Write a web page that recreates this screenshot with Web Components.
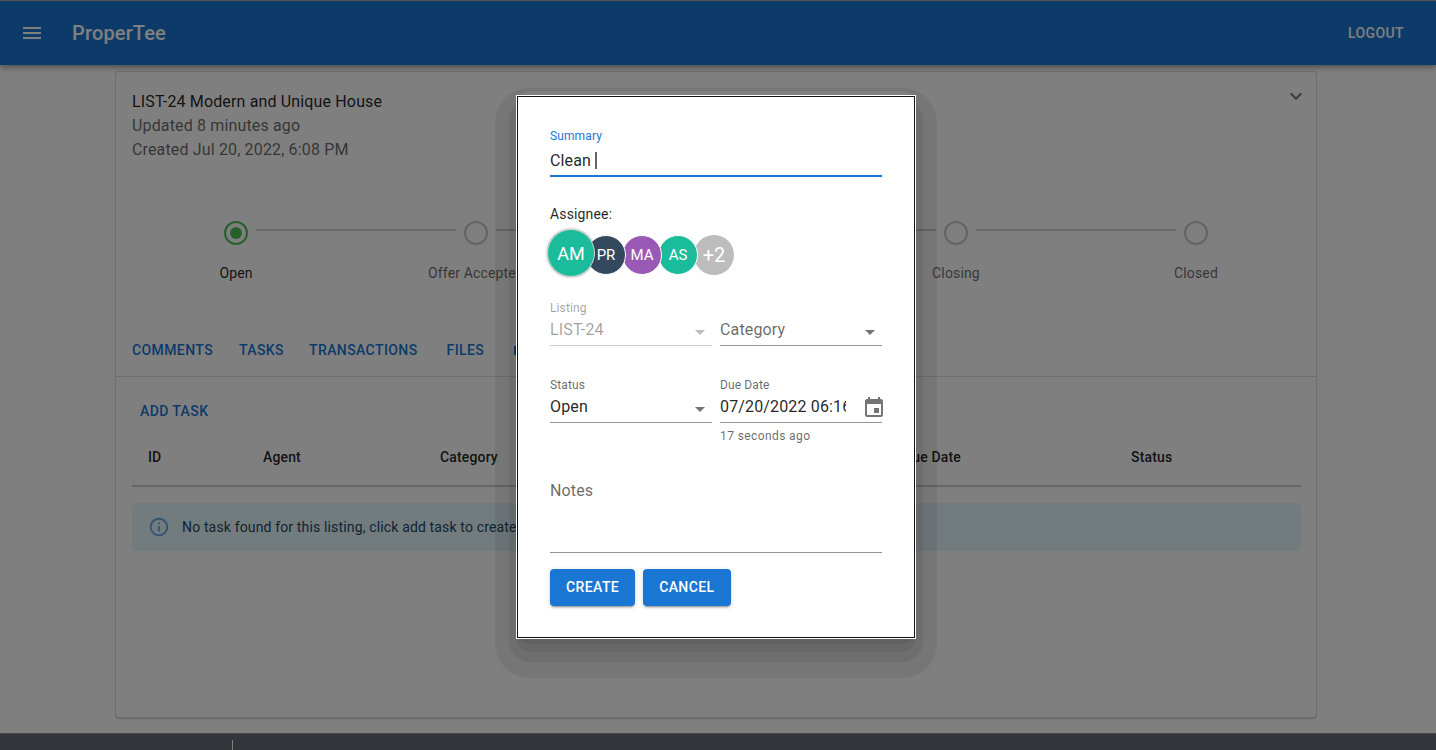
<!DOCTYPE html>
<html>
<head>
<meta charset="utf-8">
<title>ProperTee</title>
<style>
  html, body { margin: 0; height: 100%; overflow: hidden; }
  body { font-family: Roboto, "Liberation Sans", sans-serif; background: #fff; }
  pt-shell { height: 100%; }
</style>
</head>
<body>
<pt-shell>
  <pt-app-bar slot="bar" title="ProperTee"></pt-app-bar>
  <pt-listing-card>
    <span slot="title">LIST-24 Modern and Unique House</span>
    <span slot="updated">Updated 8 minutes ago</span>
    <span slot="created">Created Jul 20, 2022, 6:08 PM</span>
  </pt-listing-card>
  <pt-footer slot="footer"></pt-footer>
</pt-shell>
<pt-task-dialog></pt-task-dialog>

<script>
const ARROW = `<svg class="arrow" width="24" height="24" viewBox="0 0 24 24" fill="currentColor"><path d="M7 10l5 5 5-5z"/></svg>`;

class PtShell extends HTMLElement {
  constructor() {
    super();
    this.attachShadow({ mode: "open" });
    this.shadowRoot.innerHTML = `
      <style>
        :host { display: flex; flex-direction: column; }
        main { flex: 1; min-height: 0; display: flex; justify-content: center; padding-right: 4px; }
      </style>
      <slot name="bar"></slot>
      <main><slot></slot></main>
      <slot name="footer"></slot>
    `;
  }
}

class PtAppBar extends HTMLElement {
  constructor() {
    super();
    this.attachShadow({ mode: "open" });
    this.shadowRoot.innerHTML = `
      <style>
        :host {
          display: flex; align-items: center; height: 64px; padding: 0 32px 0 20px;
          background: #1976d2; color: #fff; border-top: 1px solid #aaa;
          box-shadow: 0 2px 4px -1px rgba(0,0,0,.2), 0 4px 5px rgba(0,0,0,.14), 0 1px 10px rgba(0,0,0,.12);
          position: relative; z-index: 1;
        }
        svg { display: block; margin-right: 28px; }
        h1 { margin: 0; flex: 1; font-size: 20px; font-weight: 500; letter-spacing: .0075em; }
        span { font-size: 14px; font-weight: 500; letter-spacing: .02857em; }
      </style>
      <svg width="24" height="24" viewBox="0 0 24 24" fill="currentColor"><path d="M3 18h18v-2H3v2zm0-5h18v-2H3v2zm0-7v2h18V6H3z"/></svg>
      <h1></h1>
      <span>LOGOUT</span>
    `;
    this.shadowRoot.querySelector("h1").innerText = this.getAttribute("title");
  }
}

class PtStepper extends HTMLElement {
  constructor() {
    super();
    this.attachShadow({ mode: "open" });
    const steps = ["Open", "Offer Accepted", "", "Closing", "Closed"];
    this.shadowRoot.innerHTML = `
      <style>
        :host { display: grid; grid-template-columns: repeat(5, 240px); }
        .step { position: relative; display: flex; flex-direction: column; align-items: center; }
        svg { display: block; color: #c8c8c8; }
        .step.active svg { color: #50c058; }
        .line { position: absolute; top: 8px; left: -100px; width: 200px; height: 2px; background: #d0d0d0; }
        .label { margin-top: 18px; height: 20px; font-size: 14px; line-height: 20px; letter-spacing: .01071em; color: rgba(0,0,0,.6); }
        .step.active .label { color: rgba(0,0,0,.87); }
      </style>
      ${steps.map((s, i) => `
        <div class="step ${i === 0 ? "active" : ""}">
          ${i > 0 ? '<div class="line"></div>' : ""}
          <svg width="24" height="24" viewBox="0 0 24 24" fill="none">
            <circle cx="12" cy="12" r="11" stroke="currentColor" stroke-width="2"/>
            ${i === 0 ? '<circle cx="12" cy="12" r="6" fill="currentColor"/>' : ""}
          </svg>
          <div class="label">${s}</div>
        </div>`).join("")}
    `;
  }
}

class PtTabs extends HTMLElement {
  constructor() {
    super();
    this.attachShadow({ mode: "open" });
    this.shadowRoot.innerHTML = `
      <style>
        :host {
          display: flex; align-items: center; gap: 26px; box-sizing: border-box; height: 49px; padding: 0 16px 4px;
          border-bottom: 1px solid rgba(0,0,0,.12);
          font-size: 14px; font-weight: 500; letter-spacing: .02857em; color: #1976d2;
        }
        .trans { margin-left: -1px; }
        .files { margin-left: 3px; }
        .stem { width: 2px; height: 9px; margin-left: 4px; background: #1976d2; }
      </style>
      <span>COMMENTS</span><span>TASKS</span><span class="trans">TRANSACTIONS</span><span class="files">FILES</span>
      <div class="stem"></div>
    `;
  }
}

class PtAlert extends HTMLElement {
  constructor() {
    super();
    this.attachShadow({ mode: "open" });
    this.shadowRoot.innerHTML = `
      <style>
        :host {
          display: flex; align-items: center; gap: 12px; box-sizing: border-box; height: 48px; padding: 0 16px 1px;
          border-radius: 4px; background: #e5f6fd; color: #1b4a6b;
          font-size: 14px; letter-spacing: .01071em;
        }
        svg { display: block; color: #6aa8e8; }
      </style>
      <svg width="22" height="22" viewBox="0 0 24 24" fill="currentColor"><path d="M11 7h2v2h-2zm0 4h2v6h-2zm1-9C6.48 2 2 6.48 2 12s4.48 10 10 10 10-4.48 10-10S17.52 2 12 2zm0 18c-4.41 0-8-3.59-8-8s3.59-8 8-8 8 3.59 8 8-3.59 8-8 8z"/></svg>
      <span><slot></slot></span>
    `;
  }
}

class PtTaskTable extends HTMLElement {
  constructor() {
    super();
    this.attachShadow({ mode: "open" });
    this.shadowRoot.innerHTML = `
      <style>
        :host { display: block; margin: 0 15px 0 16px; font-size: 14px; letter-spacing: .01071em; color: rgba(0,0,0,.87); }
        .add {
          display: block; padding: 23px 8px 0; line-height: 22px; height: 28px;
          font-weight: 500; letter-spacing: .02857em; color: #1976d2;
        }
        .head {
          display: grid; grid-template-columns: 115px 177px 463px 228px 1fr;
          height: 57px; align-items: center; border-bottom: 2px solid rgba(0,0,0,.2);
          margin-bottom: 16px; font-weight: 500;
        }
        .head span { padding-left: 16px; }
      </style>
      <span class="add">ADD TASK</span>
      <div class="head">
        <span>ID</span><span>Agent</span><span>Category</span><span>Due Date</span><span>Status</span>
      </div>
      <pt-alert>No task found for this listing, click add task to create</pt-alert>
    `;
  }
}

class PtListingCard extends HTMLElement {
  constructor() {
    super();
    this.attachShadow({ mode: "open" });
    this.shadowRoot.innerHTML = `
      <style>
        :host {
          display: block; box-sizing: border-box; width: 1202px; height: 647px; margin-top: 6px;
          border: 1px solid rgba(0,0,0,.12); border-radius: 4px; background: #fff;
          box-shadow: 0 1px 1px rgba(0,0,0,.2);
        }
        header { display: flex; justify-content: space-between; padding: 18px 8px 0 16px; height: 88px; box-sizing: border-box; }
        .lines { font-size: 16px; line-height: 24px; letter-spacing: .00938em; color: rgba(0,0,0,.6); }
        .lines div:first-child { color: rgba(0,0,0,.87); }
        header svg { display: block; margin-top: -6px; color: rgba(0,0,0,.54); }
        pt-stepper { margin-top: 61px; }
        pt-tabs { margin-top: 45px; }
      </style>
      <header>
        <div class="lines">
          <div><slot name="title"></slot></div>
          <div><slot name="updated"></slot></div>
          <div><slot name="created"></slot></div>
        </div>
        <svg width="24" height="24" viewBox="0 0 24 24" fill="currentColor"><path d="M16.59 8.59 12 13.17 7.41 8.59 6 10l6 6 6-6z"/></svg>
      </header>
      <pt-stepper></pt-stepper>
      <pt-tabs></pt-tabs>
      <pt-task-table></pt-task-table>
    `;
  }
}

class PtFooter extends HTMLElement {
  constructor() {
    super();
    this.attachShadow({ mode: "open" });
    this.shadowRoot.innerHTML = `
      <style>
        :host { display: block; box-sizing: border-box; height: 17px; padding: 6px 0 0 232px; background: #646c76; border-top: 1px solid #8c8c8c; }
        div { width: 1px; height: 10px; background: #fff; }
      </style>
      <div></div>
    `;
  }
}

class PtAvatarGroup extends HTMLElement {
  constructor() {
    super();
    this.attachShadow({ mode: "open" });
    this.shadowRoot.innerHTML = `
      <style>
        :host { display: flex; align-items: flex-start; margin-left: -3px; height: 48px; }
        div {
          box-sizing: border-box; width: 40px; height: 40px; margin: 6px 0 0 -4px; border-radius: 50%;
          display: flex; align-items: center; justify-content: center;
          border: 1px solid #fff; color: #fff; font-size: 15px; position: relative;
        }
        .lead {
          width: 48px; height: 48px; margin: 0 -5px 0 0; font-size: 18px; z-index: 5;
          border: 1px solid #d8d8d8;
          box-shadow: 0 0 2px rgba(0,0,0,.5);
        }
        .more { border: 0; font-size: 20px; }
      </style>
      <div class="lead" style="background:#1abc9c">AM</div>
      <div style="background:#34495e;z-index:4">PR</div>
      <div style="background:#9b59b6;z-index:3">MA</div>
      <div style="background:#1abc9c;z-index:2">AS</div>
      <div class="more" style="background:#bdbdbd;z-index:1">+2</div>
    `;
  }
}

class PtField extends HTMLElement {
  constructor() {
    super();
    this.attachShadow({ mode: "open" });
    const label = this.getAttribute("label");
    const value = this.getAttribute("value");
    const helper = this.getAttribute("helper");
    const select = this.hasAttribute("select");
    this.shadowRoot.innerHTML = `
      <style>
        :host { display: block; font-size: 16px; letter-spacing: .00938em; color: rgba(0,0,0,.87); }
        :host([disabled]) { color: rgba(0,0,0,.38); }
        .label { height: 17px; font-size: 12px; line-height: 17px; color: rgba(0,0,0,.6); letter-spacing: .00938em; }
        :host([disabled]) .label { color: rgba(0,0,0,.38); }
        :host([focused]) .label { color: #1976d2; line-height: 15px; }
        .box {
          display: flex; align-items: center; height: 29px; padding-bottom: 4px; box-sizing: border-box;
          border-bottom: 1px solid rgba(0,0,0,.42);
        }
        :host([disabled]) .box { border-bottom-color: rgba(0,0,0,.2); }
        :host([focused]) .box { height: 31px; padding-bottom: 1px; border-bottom: 2px solid #1976d2; }
        .value { flex: 1; white-space: nowrap; overflow: hidden; min-width: 0; }
        :host([clip]) .value { flex: none; width: 126px; }
        .placeholder { color: rgba(0,0,0,.6); }
        .arrow { display: block; flex: none; margin-top: 5px; color: rgba(0,0,0,.54); }
        :host([disabled]) .arrow { color: rgba(0,0,0,.26); }
        .caret { display: inline-block; width: 2px; height: 17px; margin-left: 4px; background: #666; vertical-align: -3px; }
        .helper { margin-top: 5px; font-size: 12px; line-height: 16px; letter-spacing: .03333em; color: rgba(0,0,0,.6); }
      </style>
      ${label ? `<div class="label">${label}</div>` : ""}
      <div class="box">
        <div class="value ${value ? "" : "placeholder"}">${value || this.getAttribute("placeholder") || ""}${this.hasAttribute("focused") ? '<span class="caret"></span>' : ""}</div>
        ${select ? ARROW : ""}
        <slot></slot>
      </div>
      ${helper ? `<div class="helper">${helper}</div>` : ""}
    `;
  }
}

class PtButton extends HTMLElement {
  constructor() {
    super();
    this.attachShadow({ mode: "open" });
    this.shadowRoot.innerHTML = `
      <style>
        :host {
          display: inline-flex; align-items: center; box-sizing: border-box; height: 37px; padding: 0 16px 1px; border-radius: 4px;
          background: #1976d2; color: #fff; font-size: 14px; font-weight: 500; letter-spacing: .02857em;
          box-shadow: 0 3px 1px -2px rgba(0,0,0,.2), 0 2px 2px rgba(0,0,0,.14), 0 1px 5px rgba(0,0,0,.12);
        }
      </style>
      <slot></slot>
    `;
  }
}

class PtTaskDialog extends HTMLElement {
  constructor() {
    super();
    this.attachShadow({ mode: "open" });
    this.shadowRoot.innerHTML = `
      <style>
        :host {
          position: fixed; inset: 0; z-index: 10; display: block;
          background: rgba(0,0,0,.5); padding: 95px 0 0 516px;
        }
        /* the reference's shadow is banded, so stacked hard shadows instead of a blur */
        .glow {
          position: absolute; left: 516px; top: 91px; width: 400px; height: 548px; border-radius: 14px;
          box-shadow:
            0 5px 0 0 rgba(0,0,0,.07),
            0 13px 0 0 rgba(0,0,0,.07),
            0 15.5px 0 7.5px rgba(0,0,0,.07),
            0 18px 0 21px rgba(0,0,0,.07);
        }
        .paper {
          position: relative;
          box-sizing: border-box; width: 400px; height: 544px; padding: 33px 33px 0;
          background: #fff; border: 1px solid #fff; outline: 1px solid #111; outline-offset: -2px;
        }
        .assignee { margin-top: 27px; font-size: 14px; line-height: 20px; letter-spacing: .01071em; color: rgba(0,0,0,.87); }
        pt-avatar-group { margin-top: 5px; }
        .row { display: grid; grid-template-columns: 162px 162px; gap: 8px; }
        .listing { margin-top: 23px; }
        .status { margin-top: 31px; }
        .notes { margin-top: 26px; height: 83px; box-sizing: border-box; padding-top: 11px; font-size: 16px; letter-spacing: .00938em; color: rgba(0,0,0,.6); border-bottom: 1px solid rgba(0,0,0,.42); }
        .actions { display: flex; gap: 8px; margin-top: 16px; }
        .cal { display: block; margin: 4px -4px 0 auto; color: rgba(0,0,0,.54); }
      </style>
      <div class="glow"></div>
      <div class="paper">
        <pt-field label="Summary" value="Clean" focused></pt-field>
        <div class="assignee">Assignee:</div>
        <pt-avatar-group></pt-avatar-group>
        <div class="row listing">
          <pt-field label="Listing" value="LIST-24" select disabled></pt-field>
          <pt-field label="&nbsp;" placeholder="Category" select></pt-field>
        </div>
        <div class="row status">
          <pt-field label="Status" value="Open" select></pt-field>
          <pt-field label="Due Date" value="07/20/2022 06:16 PM" helper="17 seconds ago" clip>
            <svg class="cal" width="24" height="24" viewBox="0 0 24 24" fill="currentColor"><path d="M17 12h-5v5h5v-5zM16 1v2H8V1H6v2H5c-1.11 0-1.99.9-1.99 2L3 19c0 1.1.89 2 2 2h14c1.1 0 2-.9 2-2V5c0-1.1-.9-2-2-2h-1V1h-2zm3 18H5V8h14v11z"/></svg>
          </pt-field>
        </div>
        <div class="notes">Notes</div>
        <div class="actions">
          <pt-button>CREATE</pt-button>
          <pt-button>CANCEL</pt-button>
        </div>
      </div>
    `;
  }
}

customElements.define("pt-shell", PtShell);
customElements.define("pt-app-bar", PtAppBar);
customElements.define("pt-stepper", PtStepper);
customElements.define("pt-tabs", PtTabs);
customElements.define("pt-alert", PtAlert);
customElements.define("pt-task-table", PtTaskTable);
customElements.define("pt-listing-card", PtListingCard);
customElements.define("pt-footer", PtFooter);
customElements.define("pt-avatar-group", PtAvatarGroup);
customElements.define("pt-field", PtField);
customElements.define("pt-button", PtButton);
customElements.define("pt-task-dialog", PtTaskDialog);
</script>
</body>
</html>
